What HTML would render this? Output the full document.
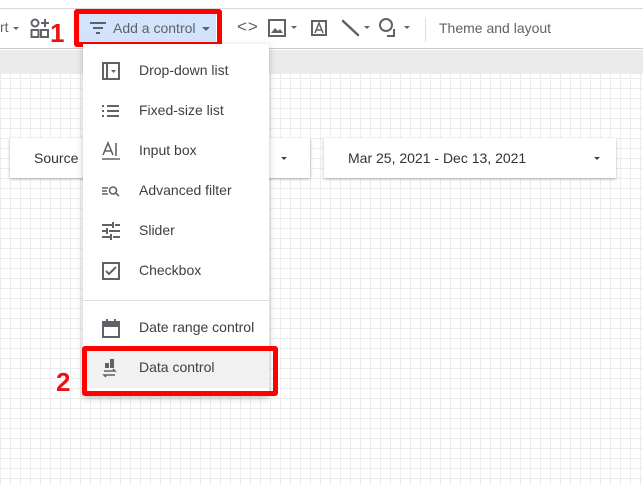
<!DOCTYPE html>
<html><head><style>
*{margin:0;padding:0;box-sizing:border-box}
body{width:643px;height:485px;overflow:hidden;position:relative;font-family:"Liberation Sans",Arial,sans-serif;background:#fff}
.grid{position:absolute;left:0;top:74px;width:643px;height:411px;background-color:#fff;
background-image:linear-gradient(#ececec 1px,transparent 1px),linear-gradient(90deg,#ececec 1px,transparent 1px);background-size:10px 10px;background-position:0 4px}
.topline{position:absolute;left:0;top:8px;width:643px;height:1px;background:#dadada}
.toolbar{position:absolute;left:0;top:9px;width:643px;height:40px;background:#fff;border-bottom:1px solid #c8c8c8}
.band{position:absolute;left:0;top:50px;width:643px;height:24px;background:#ebebeb}
.t{position:absolute;color:#5f6368;font-size:14px}
.card{position:absolute;background:#fff;box-shadow:0 1px 3px rgba(0,0,0,.3);height:40px}
.card span{position:absolute;top:12px;font-size:14px;color:#333}
.caret{position:absolute;width:0;height:0;border-left:3px solid transparent;border-right:3px solid transparent;border-top:3px solid #444}
.menu{position:absolute;left:83px;top:44px;width:186px;height:352px;background:#fff;box-shadow:0 2px 6px rgba(0,0,0,.25)}
.item{position:absolute;left:0;width:186px;height:40px}
.item span{position:absolute;left:56px;top:11px;font-size:14px;color:#3c4043}
.item svg{position:absolute;left:18px;top:10px}
.red{position:absolute;border:5px solid #f00;border-radius:3px}
.num{position:absolute;color:#e8121b;font-weight:bold;font-size:26px;text-shadow:1px 1px 0 #fff,-1px -1px 0 #fff,1px -1px 0 #fff,-1px 1px 0 #fff}
</style></head><body>
<div class="grid"></div>
<div class="topline"></div>
<div class="toolbar"></div>
<div class="band"></div>

<div class="t" style="left:0;top:19px">rt</div>
<div class="caret" style="left:13px;top:27px;border-top-color:#666"></div>
<svg style="position:absolute;left:30px;top:18px" width="22" height="22" viewBox="0 0 22 22" fill="none" stroke="#5f6368" stroke-width="2"><circle cx="5" cy="5" r="3.5"/><rect x="1.5" y="12" width="7" height="7"/><rect x="11" y="12" width="7" height="7"/><path d="M15 1v8M11 5h8"/></svg>
<div class="num" style="left:50px;top:18px">1</div>

<div style="position:absolute;left:79px;top:14px;width:137px;height:28px;background:#d2e3fc"></div>
<svg style="position:absolute;left:89px;top:20px" width="18" height="16" viewBox="0 0 18 16" stroke="#5f6368" stroke-width="2"><path d="M1 3h16M4 8h10M7 13h4"/></svg>
<div class="t" style="left:113px;top:20px">Add a control</div>
<div class="caret" style="left:202px;top:27px;border-left-width:4px;border-right-width:4px;border-top:4px solid #5f6368"></div>
<div class="red" style="left:74px;top:9px;width:148px;height:38px"></div>

<div class="t" style="left:237px;top:17px;font-size:17px;letter-spacing:1px">&lt;&gt;</div>
<svg style="position:absolute;left:268px;top:19px" width="18" height="18" viewBox="0 0 18 18" fill="none" stroke="#5f6368" stroke-width="2"><rect x="1" y="1" width="16" height="16"/><path d="M3 14l4-5 3 3 2-2 3 4z" fill="#5f6368" stroke="none"/></svg>
<div class="caret" style="left:291px;top:26px;border-top-color:#5f6368"></div>
<svg style="position:absolute;left:310px;top:19px" width="18" height="18" viewBox="0 0 18 18" fill="none" stroke="#5f6368" stroke-width="2"><rect x="2" y="2" width="14" height="14"/><path d="M5 14l4-10 4 10M6.5 11h5" stroke-width="1.5"/></svg>
<svg style="position:absolute;left:340px;top:18px" width="22" height="20" viewBox="0 0 22 20" stroke="#5f6368" stroke-width="2.5" stroke-linecap="round"><path d="M3 3l15 14"/></svg>
<div class="caret" style="left:364px;top:26px;border-top-color:#5f6368"></div>
<svg style="position:absolute;left:378px;top:17px" width="24" height="22" viewBox="0 0 24 22" fill="none" stroke="#5f6368" stroke-width="2"><circle cx="8" cy="8" r="6"/><path d="M9 19h7v-7"/></svg>
<div class="caret" style="left:404px;top:26px;border-top-color:#5f6368"></div>
<div style="position:absolute;left:425px;top:18px;width:1px;height:24px;background:#ddd"></div>
<div class="t" style="left:439px;top:20px">Theme and layout</div>

<div class="card" style="left:10px;top:138px;width:300px"><span style="left:24px">Source ,</span><div class="caret" style="left:271px;top:19px"></div></div>
<div class="card" style="left:324px;top:138px;width:292px"><span style="left:24px">Mar 25, 2021 - Dec 13, 2021</span><div class="caret" style="left:270px;top:19px"></div></div>

<div class="menu">
<div class="item" style="top:7px"><svg width="20" height="20" viewBox="0 0 20 20" fill="none" stroke="#5f6368" stroke-width="2"><rect x="2" y="2" width="16" height="16"/><path d="M6 2v16"/><path d="M10 9h5l-2.5 3z" fill="#5f6368" stroke="none"/></svg><span>Drop-down list</span></div>
<div class="item" style="top:47px"><svg width="20" height="20" viewBox="0 0 20 20" stroke="#5f6368" stroke-width="2"><path d="M1 5h2M6 5h12M1 10h2M6 10h12M1 15h2M6 15h12"/></svg><span>Fixed-size list</span></div>
<div class="item" style="top:87px"><svg width="20" height="20" viewBox="0 0 20 20" fill="none" stroke="#5f6368" stroke-width="1.6"><path d="M2 14l5-12 5 12M4 10h6M15 2v13M1 18h18"/></svg><span>Input box</span></div>
<div class="item" style="top:127px"><svg width="20" height="20" viewBox="0 0 20 20" fill="none" stroke="#5f6368" stroke-width="1.6"><path d="M1 7h6M1 10h5M1 13h6"/><circle cx="12" cy="9.5" r="3.5"/><path d="M14.5 12l3.5 3"/></svg><span>Advanced filter</span></div>
<div class="item" style="top:167px"><svg width="20" height="20" viewBox="0 0 20 20" stroke="#5f6368" stroke-width="2"><path d="M1 4h10M14 4h5M12 1v6M1 10h4M8 10h11M6 7v6M1 16h8M12 16h7M10 13v6"/></svg><span>Slider</span></div>
<div class="item" style="top:207px"><svg width="20" height="20" viewBox="0 0 20 20" fill="none" stroke="#5f6368" stroke-width="2"><rect x="2" y="2" width="16" height="16"/><path d="M5 10l3 3 7-7"/></svg><span>Checkbox</span></div>
<div style="position:absolute;left:0;top:256px;width:186px;height:1px;background:#e0e0e0"></div>
<div class="item" style="top:264px"><svg width="20" height="20" viewBox="0 0 20 20" fill="none" stroke="#5f6368" stroke-width="2"><rect x="2" y="4" width="16" height="15"/><path d="M2 7h16" stroke-width="4"/><path d="M6 1v3M14 1v3"/></svg><span>Date range control</span></div>
<div class="item" style="top:304px;background:#f1f1f1"><svg width="20" height="20" viewBox="0 0 20 20" fill="#5f6368"><rect x="4" y="5" width="4" height="5"/><rect x="9" y="1" width="4" height="9"/><path d="M3 13h11l-2-2M14 17H3l2 2" fill="none" stroke="#5f6368" stroke-width="1.5"/></svg><span>Data control</span></div>
</div>
<div class="red" style="left:82px;top:346px;width:196px;height:50px"></div>
<div class="num" style="left:56px;top:367px">2</div>
</body></html>
